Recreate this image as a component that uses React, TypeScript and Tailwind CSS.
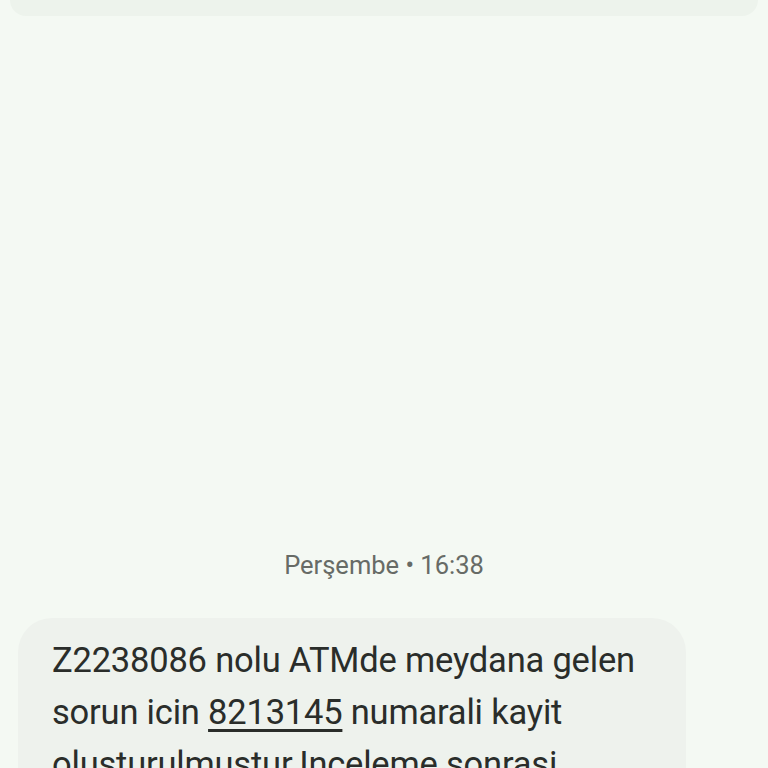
export default function App() {
  return (
    <div
      className="h-[768px] w-[768px] overflow-hidden bg-[#f4f9f3] flex flex-col"
      style={{ fontFamily: 'Roboto, "Noto Sans", sans-serif' }}
    >
      {/* bottom edge of the previous message card */}
      <div className="mx-[10px] h-[16px] shrink-0 rounded-b-[26px] bg-[#edf3ec]" />

      <div className="flex-1 flex flex-col justify-end">
        <div className="text-center text-[25.5px] text-[#676b66] leading-none mb-[40px]">
          Perşembe • 16:38
        </div>

        <div className="flex pl-[18px] pr-[82px]">
          <div className="h-[190px] w-full rounded-[34px] bg-[#eef2ed] pl-[34px] pr-[20px] pt-[16px] -mb-[40px]">
            <p className="text-[34.5px] leading-[52px] text-[#2a2d2a] tracking-[-0.2px]">
              Z2238086 nolu ATMde meydana gelen sorun icin{' '}
              <span className="underline decoration-[2.5px] underline-offset-[5px]">8213145</span>{' '}
              numarali kayit olusturulmustur.Inceleme sonrasi bilgilendirileceksiniz.
            </p>
          </div>
        </div>
      </div>
    </div>
  );
}
